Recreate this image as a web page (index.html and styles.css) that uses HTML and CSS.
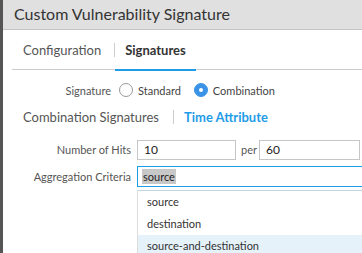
FILE: index.html
```html
<!DOCTYPE html>
<html>
<head>
<meta charset="utf-8">
<link rel="stylesheet" href="styles.css">
</head>
<body>
<div class="strip"></div>
<div class="dialog">
  <div class="header">Custom Vulnerability Signature</div>
  <div class="tabs">
    <span class="tab">Configuration</span>
    <span class="sep"></span>
    <span class="tab active">Signatures</span>
  </div>
  <div class="row sigrow">
    <span class="label sig-label">Signature</span>
    <span class="radio"></span><span class="rtext">Standard</span>
    <span class="radio checked"></span><span class="rtext">Combination</span>
  </div>
  <div class="subtabs">
    <span class="subtab">Combination Signatures</span>
    <span class="sep small"></span>
    <span class="subtab active">Time Attribute</span>
  </div>
  <div class="row field">
    <span class="label">Number of Hits</span>
    <span class="input hits">10</span>
    <span class="per">per</span>
    <span class="input secs">60</span>
  </div>
  <div class="row field">
    <span class="label">Aggregation Criteria</span>
    <span class="input agg"><span class="sel">source</span></span>
  </div>
  <div class="menu">
    <div class="item">source</div>
    <div class="item">destination</div>
    <div class="item hl">source-and-destination</div>
  </div>
</div>
</body>
</html>
```
FILE: styles.css
```css
html, body { margin: 0; padding: 0; }
body {
  display: flex;
  width: 362px;
  height: 253px;
  overflow: hidden;
  font-family: Lato, "Open Sans", sans-serif;
  color: #333;
  background: #fff;
}
.strip { width: 3px; background: #555; flex: none; }
.dialog { flex: 1; min-width: 0; }
.header {
  height: 29px;
  background: #e0e0e0;
  border-bottom: 1px solid #c4c4c4;
  font-size: 16px;
  line-height: 28px;
  padding-left: 11px;
  color: #333;
  white-space: nowrap;
}
.tabs {
  margin-left: 9px;
  height: 40px;
  border-bottom: 1px solid #ccc;
  display: flex;
  align-items: center;
  padding-left: 11px;
  padding-top: 1px;
  box-sizing: border-box;
}
.tab { font-size: 13px; color: #555; position: relative; }
.tab.active { font-weight: bold; color: #333; padding: 0 10px; }
.tab.active::after {
  content: "";
  position: absolute;
  left: 0; right: 0;
  bottom: -13px;
  height: 2px;
  background: #1f9ce8;
}
.sep { width: 1px; height: 14px; background: #ccc; margin: 0 0 0 13px; }
.sep.small { margin: 0 10px 0 14px; }
.row { display: flex; align-items: center; }
.sigrow { height: 30px; margin-top: 5px; font-size: 11px; }
.label.sig-label { width: 108px; margin-right: 8px; }
.radio {
  width: 12px; height: 12px; border: 1px solid #999; border-radius: 50%;
  box-sizing: content-box; margin-right: 5px; flex: none;
}
.radio.checked {
  background: #3a93e6; border-color: #3a93e6; position: relative;
}
.radio.checked::after {
  content: ""; position: absolute; left: 4px; top: 4px;
  width: 4px; height: 4px; border-radius: 50%; background: #fff;
}
.rtext { margin-right: 13px; color: #444; }
.subtabs {
  display: flex; align-items: center;
  margin-left: 20px; height: 24px; font-size: 13px; margin-bottom: 7px;
}
.subtab { color: #555; }
.subtab.active { color: #1f9ce8; font-weight: bold; }
.field { height: 27px; font-size: 11px; }
.label { width: 128px; text-align: right; color: #555; margin-right: 6px; }
.input {
  height: 20px; border: 1px solid #c6c6c6; box-sizing: border-box;
  display: flex; align-items: center; padding-left: 6px; font-size: 12px;
  color: #222;
}
.hits { width: 99px; }
.per { margin: 0 2px 0 5px; color: #555; font-size: 11px; }
.secs { width: 101px; }
.agg { flex: 1; height: 21px; border-color: #1f9ce8; border-right: none; padding-left: 4px; }
.sel { background: #c8c8c8; padding: 0 1px; line-height: 15px; font-size: 11px; }
.menu {
  margin-left: 134px;
  border-left: 1px solid #ddd;
  border-top: 1px solid #c6d4dd;
}
.item { height: 22px; line-height: 22px; padding-left: 9px; font-size: 11px; color: #333; }
.item.hl { background: #e6f2fa; }
```
